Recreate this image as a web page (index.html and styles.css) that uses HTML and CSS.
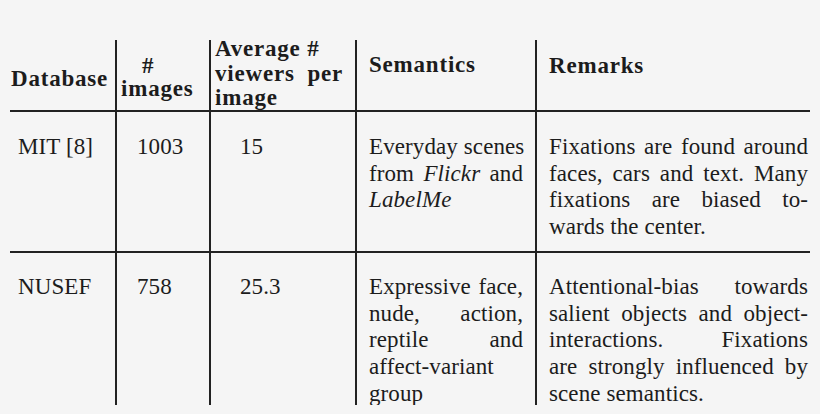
FILE: index.html
```html
<!DOCTYPE html>
<html lang="en">
<head>
<meta charset="utf-8">
<title>Eye-fixation databases</title>
<link rel="stylesheet" href="styles.css">
</head>
<body>
<div class="page">
  <div class="table">
    <div class="cell head c1 h-db"><span class="ln">Database</span></div>
    <div class="cell head c2 h-img"><span class="ln hash">#</span><span class="ln">images</span></div>
    <div class="cell head c3 h-avg">
      <div class="lift">
        <span class="ln">Average #</span>
        <span class="ln j">viewers per</span>
        <span class="ln">image</span>
      </div>
    </div>
    <div class="cell head c4 h-sem"><span class="ln">Semantics</span></div>
    <div class="cell head c5 h-rem"><span class="ln">Remarks</span></div>

    <div class="cell row1 c1"><span class="ln">MIT [8]</span></div>
    <div class="cell row1 c2"><span class="ln">1003</span></div>
    <div class="cell row1 c3"><span class="ln">15</span></div>
    <div class="cell row1 c4">
      <span class="ln j">Everyday scenes</span>
      <span class="ln j">from <i>Flickr</i> and</span>
      <span class="ln"><i>LabelMe</i></span>
    </div>
    <div class="cell row1 c5">
      <span class="ln j">Fixations are found around</span>
      <span class="ln j">faces, cars and text. Many</span>
      <span class="ln j">fixations are biased to-</span>
      <span class="ln">wards the center.</span>
    </div>

    <div class="cell row2 c1"><span class="ln">NUSEF</span></div>
    <div class="cell row2 c2"><span class="ln">758</span></div>
    <div class="cell row2 c3"><span class="ln">25.3</span></div>
    <div class="cell row2 c4">
      <span class="ln j">Expressive face,</span>
      <span class="ln j">nude, action,</span>
      <span class="ln j">reptile and</span>
      <span class="ln">affect-variant</span>
      <span class="ln">group</span>
    </div>
    <div class="cell row2 c5">
      <span class="ln j">Attentional-bias towards</span>
      <span class="ln j">salient objects and object-</span>
      <span class="ln j">interactions. Fixations</span>
      <span class="ln j">are strongly influenced by</span>
      <span class="ln">scene semantics.</span>
    </div>
  </div>
</div>
</body>
</html>
```

FILE: styles.css
```css
html, body {
  margin: 0;
  padding: 0;
  background: #f5f5f5;
}

body {
  width: 820px;
  height: 414px;
  overflow: hidden;
  font-family: "Liberation Serif", "Times New Roman", serif;
  font-size: 23px;
  color: #1c1c1c;
}

.page {
  padding: 40px 0 0 10px;
}

.table {
  display: grid;
  grid-template-columns: 107px 94px 146px 180px 273px;
  grid-template-rows: 72px 141px 152px;
  width: 800px;
  height: 365px;
}

.cell {
  box-sizing: border-box;
  border-color: #222;
  border-style: solid;
  border-width: 0 2px 0 0;
  line-height: 26.7px;
  letter-spacing: 0.1px;
}

.cell.c5 {
  border-right-width: 0;
}

.cell.head,
.cell.row1 {
  border-bottom-width: 2px;
}

.ln {
  display: block;
  white-space: nowrap;
}

.ln.j {
  text-align: justify;
  text-align-last: justify;
}

/* header */
.head {
  font-weight: bold;
  letter-spacing: 0.8px;
}

.h-db {
  padding: 26px 0 0 1px;
}

.h-img {
  padding: 14px 0 0 4px;
  line-height: 23px;
}

.h-img .hash {
  padding-left: 21px;
}

.h-avg {
  padding: 0 12px 0 4px;
  line-height: 24.5px;
}

.lift {
  margin-top: -3px;
}

.h-sem {
  padding: 12px 12px 0 12px;
}

.h-rem {
  padding: 13px 2px 0 12px;
}

/* body rows */
.row1 {
  padding-top: 22px;
}

.row2 {
  padding-top: 21px;
  overflow: hidden;
}

.row1.c1,
.row2.c1 {
  padding-left: 8px;
}

.row1.c2,
.row2.c2 {
  padding-left: 20px;
}

.row1.c3,
.row2.c3 {
  padding-left: 29px;
}

.c4:not(.head) {
  padding-left: 12px;
  padding-right: 12px;
}

.c5:not(.head) {
  padding-left: 12px;
  padding-right: 2px;
}
```
